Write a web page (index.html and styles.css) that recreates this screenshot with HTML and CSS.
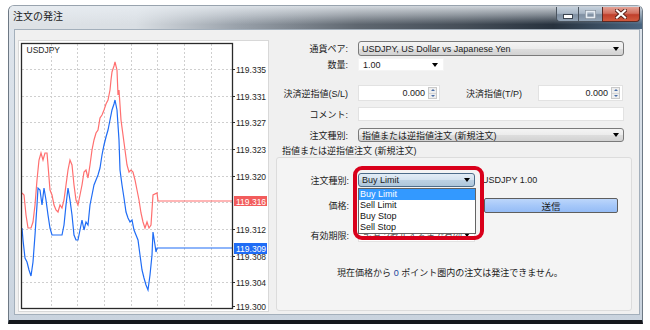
FILE: index.html
```html
<!DOCTYPE html>
<html lang="ja">
<head>
<meta charset="utf-8">
<title>注文の発注</title>
<link rel="stylesheet" href="styles.css">
</head>
<body>
<div class="window">
  <div class="titlebar">
    <span class="title">注文の発注</span>
    <div class="caption">
      <span class="cbtn cmin"><svg width="10" height="5" viewBox="0 0 10 5"><rect x="0.5" y="0.5" width="9" height="4" fill="#fff" stroke="#3a4450"/></svg></span>
      <span class="cbtn cmax"><svg width="11" height="9" viewBox="0 0 11 9"><rect x="0.5" y="0.5" width="10" height="8" fill="none" stroke="#7f8b98"/><rect x="1.5" y="1.5" width="8" height="6" fill="none" stroke="#e6ecf2" stroke-width="1.6"/></svg></span>
      <span class="cbtn cclose"><svg width="12" height="10" viewBox="0 0 12 10"><path d="M2 1.5 L10 8.5 M10 1.5 L2 8.5" stroke="#5a2018" stroke-width="4" stroke-linecap="square"/><path d="M2 1.5 L10 8.5 M10 1.5 L2 8.5" stroke="#fff" stroke-width="2.2" stroke-linecap="square"/></svg></span>
    </div>
  </div>
  <div class="client">
    <div class="chart-panel">
      <svg class="chart" width="249" height="270" viewBox="19 41 249 270">
        <g stroke="#cfcfcf" stroke-width="1" stroke-dasharray="2 2">
          <line x1="22" y1="69.5" x2="232" y2="69.5"/>
          <line x1="22" y1="96.5" x2="232" y2="96.5"/>
          <line x1="22" y1="122.5" x2="232" y2="122.5"/>
          <line x1="22" y1="149.5" x2="232" y2="149.5"/>
          <line x1="22" y1="176.5" x2="232" y2="176.5"/>
          <line x1="22" y1="202.5" x2="232" y2="202.5"/>
          <line x1="22" y1="229.5" x2="232" y2="229.5"/>
          <line x1="22" y1="256.5" x2="232" y2="256.5"/>
          <line x1="22" y1="282.5" x2="232" y2="282.5"/>
          <line x1="51.5" y1="44" x2="51.5" y2="308"/>
          <line x1="77.5" y1="44" x2="77.5" y2="308"/>
          <line x1="104.5" y1="44" x2="104.5" y2="308"/>
          <line x1="131.5" y1="44" x2="131.5" y2="308"/>
          <line x1="157.5" y1="44" x2="157.5" y2="308"/>
          <line x1="184.5" y1="44" x2="184.5" y2="308"/>
          <line x1="211.5" y1="44" x2="211.5" y2="308"/>
        </g>
        <polyline fill="none" stroke="#ff6f6f" stroke-width="1.2" points="22,193 24,195 26,215 28,228 31,228 33,222 35,205 37,180 39,160 41,153 43,160 45,153 47,153 48,165 50,190 52,195 54,205 56,210 58,212 60,205 62,208 64,200 66,185 68,170 70,160 72,165 74,185 76,200 78,205 80,195 82,185 84,172 86,170 88,178 90,165 92,150 94,140 96,133 98,130 100,118 102,115 104,110 106,104 108,100 110,90 111,80 112,72 114,66 115,62 117,70 118,95 119,90 121,120 123,135 125,150 127,165 129,172 131,170 133,172 135,180 137,190 139,200 141,213 143,222 145,228 147,222 149,228 151,225 153,195 157,193 158,201 232,201"/>
        <polyline fill="none" stroke="#1f6cf5" stroke-width="1.2" points="22,228 23,240 25,258 27,262 29,270 31,276 33,262 35,235 37,205 38,188 40,190 42,205 44,188 46,200 48,215 50,228 52,235 62,235 64,225 66,205 68,188 70,200 72,215 74,235 76,240 78,240 80,230 82,220 84,230 86,222 88,225 90,205 92,195 94,185 96,180 98,175 100,168 102,155 104,145 106,137 108,130 110,120 112,110 114,104 115,100 117,110 119,140 120,170 122,185 124,198 126,212 128,218 130,222 132,220 134,230 136,235 138,240 140,255 142,270 144,278 146,285 148,290 150,275 152,255 153,232 155,245 156,252 157,248 232,248"/>
        <rect x="21.5" y="43.5" width="211" height="265" fill="none" stroke="#2a2a2a" stroke-width="1.3"/>
        <g stroke="#2a2a2a" stroke-width="1">
          <line x1="232" y1="69.5" x2="235" y2="69.5"/>
          <line x1="232" y1="96.5" x2="235" y2="96.5"/>
          <line x1="232" y1="122.5" x2="235" y2="122.5"/>
          <line x1="232" y1="149.5" x2="235" y2="149.5"/>
          <line x1="232" y1="176.5" x2="235" y2="176.5"/>
          <line x1="232" y1="229.5" x2="235" y2="229.5"/>
          <line x1="232" y1="256.5" x2="235" y2="256.5"/>
          <line x1="232" y1="282.5" x2="235" y2="282.5"/>
          <line x1="232" y1="306.5" x2="235" y2="306.5"/>
        </g>
        <g class="axis">
          <text x="26.5" y="53">USDJPY</text>
          <text x="236" y="72.5">119.335</text>
          <text x="236" y="99.5">119.331</text>
          <text x="236" y="125.5">119.327</text>
          <text x="236" y="152.5">119.323</text>
          <text x="236" y="179.5">119.320</text>
          <text x="236" y="232.5">119.312</text>
          <text x="236" y="260">119.308</text>
          <text x="236" y="285.5">119.304</text>
          <text x="236" y="309.5">119.300</text>
        </g>
        <rect x="234" y="196" width="33" height="10" fill="#f25c5c"/>
        <text class="axis tag" x="236" y="204.5">119.316</text>
        <rect x="234" y="243" width="33" height="11" fill="#1f6cf5"/>
        <text class="axis tag" x="236" y="251.5">119.309</text>
      </svg>
    </div>

    <div class="form">
      <div class="row r1">
        <span class="lbl">通貨ペア:</span>
        <div class="combo w-full">USDJPY, US Dollar vs Japanese Yen<span class="arrow"></span></div>
      </div>
      <div class="row r2">
        <span class="lbl">数量:</span>
        <div class="edit qty">1.00<span class="arrow"></span></div>
      </div>
      <div class="row r3">
        <span class="lbl">決済逆指値(S/L)</span>
        <div class="edit spin sl"><span class="val">0.000</span><span class="spinner"><i class="up"></i><i class="dn"></i></span></div>
        <span class="lbl2">決済指値(T/P)</span>
        <div class="edit spin tp"><span class="val">0.000</span><span class="spinner"><i class="up"></i><i class="dn"></i></span></div>
      </div>
      <div class="row r4">
        <span class="lbl">コメント:</span>
        <div class="edit w-full"></div>
      </div>
      <div class="row r5">
        <span class="lbl">注文種別:</span>
        <div class="combo w-full">指値または逆指値注文 (新規注文)<span class="arrow"></span></div>
      </div>
      <div class="legend">指値または逆指値注文 (新規注文)</div>
      <div class="group">
        <div class="grow g1">
          <span class="lbl g">注文種別:</span>
          <div class="combo focus gfield">Buy Limit<span class="arrow"></span></div>
          <span class="sym">USDJPY 1.00</span>
        </div>
        <div class="grow g2">
          <span class="lbl g">価格:</span>
          <div class="edit gfield"></div>
          <div class="send">送信</div>
        </div>
        <div class="grow g3">
          <span class="lbl g">有効期限:</span>
          <div class="edit gfield exp"><span class="exptext">キャンセルするまで有効</span><span class="arrow"></span></div>
        </div>
        <div class="msg">現在価格から <span class="zero">0</span> ポイント圏内の注文は発注できません。</div>

        <ul class="dropdown">
          <li class="sel">Buy Limit</li>
          <li>Sell Limit</li>
          <li>Buy Stop</li>
          <li>Sell Stop</li>
        </ul>
        <div class="highlight"></div>
      </div>
    </div>
  </div>
</div>
</body>
</html>
```

FILE: styles.css
```css
* { box-sizing: border-box; }

body {
  margin: 0;
  background: #ffffff;
  font-family: "Liberation Sans", "Noto Sans CJK JP", sans-serif;
  font-size: 9px;
  color: #1b1b1b;
}

.window {
  margin: 5px 0 0 8px;
  width: 635px;
  height: 319px;
  display: flex;
  flex-direction: column;
  padding: 0 2px 5px 5px;
  background: linear-gradient(to bottom, #dfe5ec, #d2dbe5 70%, #c9d3de);
  border: 1px solid #6d7884;
  border-top-color: #98a3ae;
  border-bottom: 4px solid #15181c;
  border-radius: 6px 6px 0 0;
}

.titlebar {
  height: 23px;
  margin: 0 -2px 0 -5px;
  display: flex;
  align-items: flex-start;
  border-radius: 5px 5px 0 0;
  background:
    linear-gradient(to bottom, rgba(232,237,242,0.85) 0%, rgba(232,237,242,0.45) 40%, rgba(232,237,242,0) 80%),
    linear-gradient(to right, #dfe3e7 0%, #d9dee3 20%, #9aa2ab 36%, #5f6770 55%, #454e58 72%, #27323e 86%, #4a6580 100%);
}

.title {
  padding: 5px 0 0 4px;
  font-size: 10px;
  line-height: 12px;
  color: #1a1a1a;
}

.caption {
  margin: 1px 2px 0 auto;
  display: flex;
  height: 15px;
}

.cbtn {
  height: 15px;
  display: flex;
  align-items: center;
  justify-content: center;
  border: 1px solid #4b5560;
  border-top: none;
}
.cmin {
  width: 22px;
  border-radius: 0 0 0 4px;
  border-right: none;
  background: linear-gradient(to bottom, #c4d0dc 0%, #a9b7c6 45%, #7f8fa1 55%, #93a4b6 100%);
  padding-top: 5px;
}
.cmax {
  width: 24px;
  border-right: none;
  background: linear-gradient(to bottom, #c4d0dc 0%, #a9b7c6 45%, #7f8fa1 55%, #93a4b6 100%);
}
.cclose {
  width: 38px;
  border-radius: 0 0 4px 0;
  border-color: #5a2a24;
  background: linear-gradient(to bottom, #e4a296 0%, #d2705f 45%, #c0402c 55%, #d25a3e 100%);
}

.client {
  flex: 1;
  display: flex;
  gap: 7px;
  padding: 10px 7px 2px 3px;
  background: #f0f0f0;
  border: 1px solid #a3afbb;
}

.chart-panel {
  width: 251px;
  height: 272px;
  background: #ffffff;
  border: 1px solid #d8d8d8;
}
.chart { display: block; }
.axis {
  font-family: "Liberation Sans", sans-serif;
  font-size: 8.5px;
  fill: #262626;
}
.tag { fill: #ffffff; }

.form {
  width: 356px;
  display: flex;
  flex-direction: column;
}

.row {
  display: flex;
  align-items: center;
}
.r1 { margin-top: 1px; height: 15px; }
.r2 { margin-top: 2px; height: 13px; }
.r3 { margin-top: 14px; height: 16px; }
.r4 { margin-top: 6px; height: 14px; }
.r5 { margin-top: 7px; height: 14px; }

.lbl {
  width: 72px;
  margin-right: 10px;
  text-align: right;
  white-space: nowrap;
}

.combo {
  height: 100%;
  display: flex;
  align-items: center;
  padding-left: 3px;
  border: 1px solid #7a7a7a;
  border-radius: 3px;
  background: linear-gradient(to bottom, #f4f4f4 0%, #ececec 50%, #dedede 51%, #d2d2d2 100%);
  white-space: nowrap;
}
.w-full { width: 266px; }

.arrow {
  flex: none;
  margin-left: auto;
  margin-right: 4px;
  width: 0;
  height: 0;
  border-left: 3.5px solid transparent;
  border-right: 3.5px solid transparent;
  border-top: 4px solid #000;
}

.edit {
  height: 100%;
  display: flex;
  align-items: center;
  padding-left: 4px;
  background: #ffffff;
  border: 1px solid #e2e2e2;
  white-space: nowrap;
  overflow: hidden;
}
.qty { width: 86px; border-color: #f4f4f4; }
.qty .arrow { margin-right: 5px; }

.spin { justify-content: flex-end; padding: 1px; }
.sl { width: 82px; }
.tp { width: 85px; }
.spin .val { margin-right: 3px; }
.spinner {
  width: 9px;
  height: 100%;
  display: flex;
  flex-direction: column;
  border: 1px solid #c9c9c9;
  background: #eeeeee;
  margin-right: 1px;
}
.spinner i {
  flex: 1;
  display: flex;
  align-items: center;
  justify-content: center;
}
.spinner i.up { border-bottom: 1px solid #d6d6d6; }
.spinner i::after {
  content: "";
  width: 0;
  height: 0;
  border-left: 2px solid transparent;
  border-right: 2px solid transparent;
}
.spinner i.up::after { border-bottom: 2px solid #4a6ea8; }
.spinner i.dn::after { border-top: 2px solid #4a6ea8; }

.lbl2 {
  width: 84px;
  padding-right: 2px;
  text-align: right;
  margin-right: 14px;
  white-space: nowrap;
}

.legend {
  margin-top: 4px;
  height: 11px;
  line-height: 11px;
  padding-left: 6px;
}

.group {
  position: relative;
  flex: 1;
  margin-bottom: 1px;
  border: 1px solid #dcdcdc;
  border-radius: 3px;
  background: #f4f4f4;
}

.grow {
  display: flex;
  align-items: center;
}
.g1 { margin-top: 15px; height: 14px; }
.g2 { margin-top: 11px; height: 15px; }
.g3 { margin-top: 15px; height: 14px; }
.lbl.g { margin-right: 9px; }

.gfield { width: 117px; }

.combo.focus {
  border-color: #4d6c8a;
  background: linear-gradient(to bottom, #e3edf6 0%, #d3e2ef 50%, #bcd1e3 51%, #aec6da 100%);
}

.sym { margin-left: 7px; }

.send {
  margin-left: 9px;
  width: 134px;
  height: 100%;
  display: flex;
  align-items: center;
  justify-content: center;
  border: 1px solid #5e5e5e;
  border-radius: 2px;
  background: linear-gradient(to bottom, #bcd6fb 0%, #a6c8f9 50%, #95bcf6 100%);
  font-size: 9.5px;
}

.exp { color: #555; }
.exptext {
  flex: 1;
  min-width: 0;
  overflow: hidden;
}

.msg {
  margin-top: 26px;
  height: 11px;
  line-height: 11px;
  text-align: center;
  padding-right: 8px;
}
.zero { color: #23439c; }

.dropdown {
  position: absolute;
  left: 81px;
  top: 30px;
  width: 118px;
  margin: 0;
  padding: 0;
  list-style: none;
  background: #ffffff;
  border: 1px solid #646464;
}
.dropdown li {
  height: 11px;
  line-height: 11px;
  padding-left: 1px;
  color: #111;
}
.dropdown li.sel {
  background: #3399ff;
  color: #ffffff;
}

.highlight {
  position: absolute;
  left: 76px;
  top: 8px;
  width: 131px;
  height: 74px;
  border: 4px solid #d9001b;
  border-radius: 9px;
}
```
